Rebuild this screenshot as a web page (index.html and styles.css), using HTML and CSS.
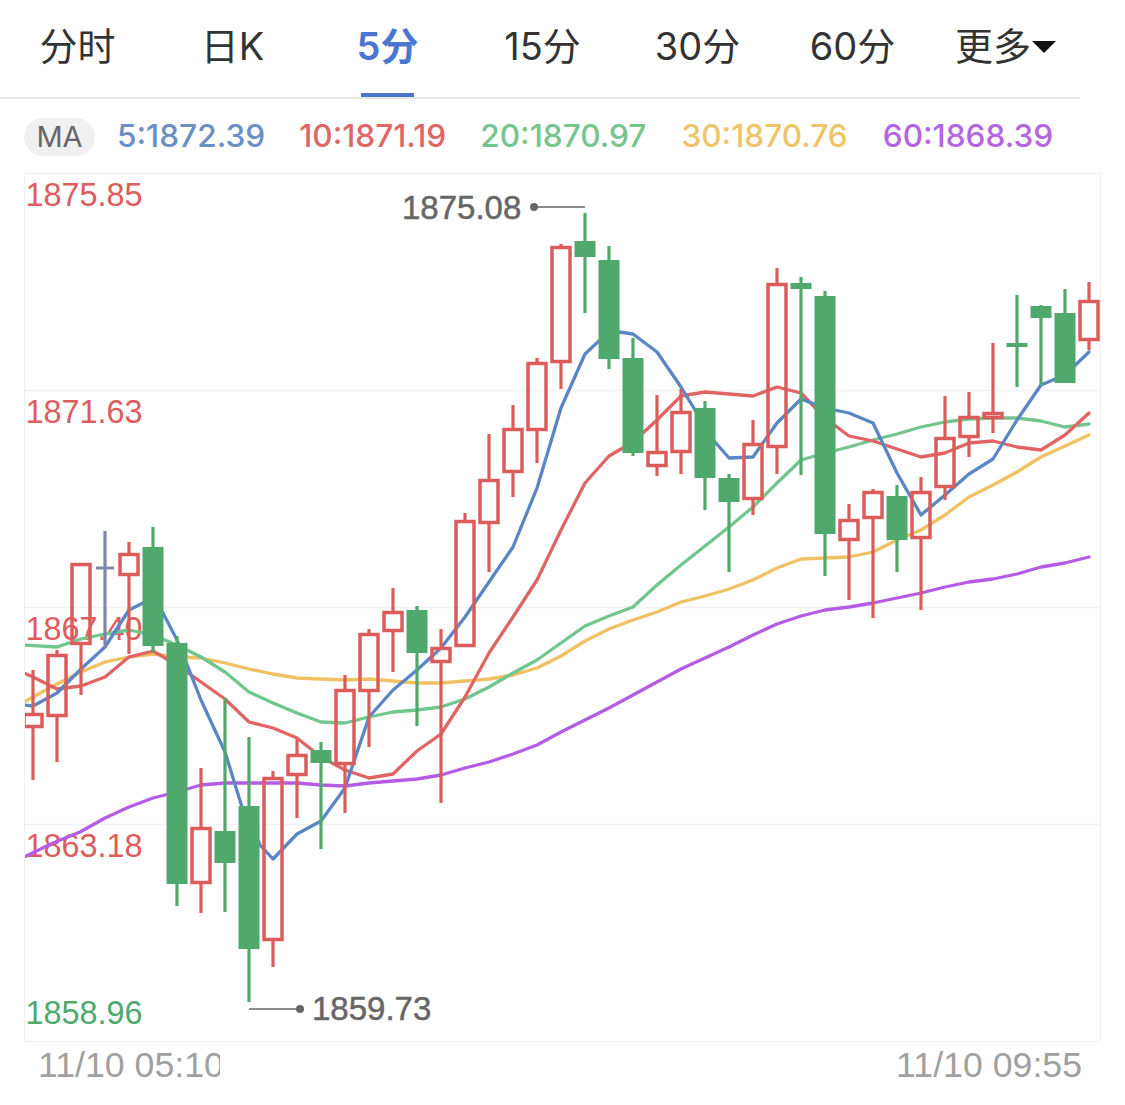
FILE: index.html
```html
<!DOCTYPE html>
<html lang="zh">
<head>
<meta charset="utf-8">
<title>K线图</title>
<link rel="stylesheet" href="styles.css">
</head>
<body>
<nav class="tabs">
  <a class="tab">分时</a>
  <a class="tab">日K</a>
  <a class="tab active">5分</a>
  <a class="tab">15分</a>
  <a class="tab">30分</a>
  <a class="tab">60分</a>
  <a class="tab">更多<span class="caret"></span></a>
</nav>
<div class="legend">
  <span class="pill">MA</span>
  <span class="ma ma5">5:1872.39</span>
  <span class="ma ma10">10:1871.19</span>
  <span class="ma ma20">20:1870.97</span>
  <span class="ma ma30">30:1870.76</span>
  <span class="ma ma60">60:1868.39</span>
</div>
<div class="chart">
  <svg class="plot" viewBox="25 174 1075 867" width="1075" height="867">
    <path class="grid" d="M25 390.5H1100M25 607.5H1100M25 824.5H1100"/>
    <text class="axis up" x="25.5" y="206">1875.85</text>
    <text class="axis up" x="25.5" y="423">1871.63</text>
    <text class="axis up" x="25.5" y="640">1867.40</text>
    <text class="axis up" x="25.5" y="857">1863.18</text>
    <text class="axis down" x="25.5" y="1024">1858.96</text>

    <polyline class="line l60" points="24,857 53,843 80,832 105,818 129,807 153,798 177,792 201,785 225,783 249,783 273,783 297,783 321,785 345,786 369,783 393,781 417,779 441,775 465,768 489,762 513,754 537,745 561,732 585,720 609,708 633,695 657,682 681,669 705,658 729,647 753,635 777,624 801,616 825,610 849,607 873,603 897,598 921,593 945,587 969,582 993,579 1017,574 1041,567 1065,563 1089,557"/>
    <polyline class="line l30" points="24,702 33,697 57,684 81,672 105,662 129,657 153,654 177,657 201,658 225,663 249,669 273,674 297,678 321,679 345,680 369,679 393,681 417,683 441,683 465,681 489,679 513,675 537,668 561,656 585,641 609,629 633,620 657,612 681,602 705,596 729,589 753,580 777,568 801,559 825,558 849,557 873,552 897,540 921,530 945,515 969,497 993,485 1017,472 1041,457 1065,446 1089,435"/>
    <polyline class="line l20" points="24,645 57,647 81,639 105,634 129,630 153,635 177,645 201,657 225,672 249,692 273,703 297,713 321,722 345,723 369,717 393,712 417,710 441,707 465,699 489,687 513,673 537,660 561,643 585,626 609,616 633,607 657,585 681,565 705,546 729,527 753,507 777,483 801,460 825,453 849,447 873,440 897,434 921,427 945,422 969,419 993,418 1017,418 1041,421 1065,427 1089,424"/>
    <polyline class="line l10" points="24,673 33,677 57,689 81,686 105,677 129,657 153,651 177,665 201,682 225,699 249,722 273,728 297,738 321,757 345,770 369,778 393,774 417,751 441,734 465,697 489,653 513,617 537,580 561,530 585,483 609,456 633,442 657,420 681,396 705,392 729,394 753,396 777,387 801,393 825,418 849,436 873,441 897,449 921,457 945,453 969,443 993,441 1017,447 1041,450 1065,435 1089,413"/>
    <polyline class="line l5" points="24,705 33,706 57,693 81,669 105,647 129,610 143,603 153,597 163,613 177,640 188,667 201,700 225,752 242,807 249,820 260,845 273,859 297,834 321,821 345,788 369,717 393,690 417,670 441,648 465,617 489,582 513,547 537,488 561,408 585,354 600,340 609,333 619,332 633,334 657,352 681,387 695,410 715,442 729,458 753,457 777,423 801,399 825,408 849,413 873,423 897,473 921,515 945,495 969,474 993,459 1017,420 1041,385 1065,375 1089,352"/>

    <path class="wick flat" d="M105 531V648M96 568H114"/>
    <path class="wick fall" d="M153 527V652M177 636V906M225 698V912M249 737V1002M321 742V849M417 606V726M585 213V313M609 246V369M633 338V456M705 401V510M729 474V572M801 277V475M825 291V576M897 485V572M1017 295V387M1041 305V385M1065 289V383"/>
    <g class="fall-bodies">
      <rect x="142.5" y="547" width="21" height="99"/>
      <rect x="166.5" y="643" width="21" height="241"/>
      <rect x="214.5" y="831" width="21" height="32"/>
      <rect x="238.5" y="806" width="21" height="143"/>
      <rect x="310.5" y="750" width="21" height="13"/>
      <rect x="406.5" y="610" width="21" height="43"/>
      <rect x="574.5" y="241" width="21" height="16"/>
      <rect x="598.5" y="260" width="21" height="99"/>
      <rect x="622.5" y="358" width="21" height="95"/>
      <rect x="694.5" y="408" width="21" height="70"/>
      <rect x="718.5" y="478" width="21" height="24"/>
      <rect x="790.5" y="283" width="21" height="6"/>
      <rect x="814.5" y="296" width="21" height="238"/>
      <rect x="886.5" y="496" width="21" height="44"/>
      <rect x="1006.5" y="343" width="21" height="4"/>
      <rect x="1030.5" y="306" width="21" height="12"/>
      <rect x="1054.5" y="313" width="21" height="70"/>
    </g>
    <path class="wick rise" d="M33 670V713M33 728V780M57 650V654M57 717V762M81 645V695M129 542V553M129 576V654M201 768V827M201 884V913M273 771V777M273 941V967M297 739V754M297 776V818M345 675V689M345 765V813M369 629V633M369 692V747M393 588V611M393 632V672M441 629V647M441 663V803M465 513V520M489 434V479M489 524V572M513 405V428M513 473V497M537 358V362M537 431V463M561 244V246M561 363V389M657 395V451M657 467V476M681 389V411M681 453V474M753 420V443M753 500V515M777 268V283M777 448V474M849 504V519M849 541V600M873 489V491M873 519V618M921 477V491M921 539V610M945 396V437M945 488V500M969 392V416M969 438V457M993 343V412M993 419V433M1089 282V300M1089 341V350"/>
    <g class="rise-bodies">
      <rect x="24" y="714.5" width="18" height="12"/>
      <rect x="48" y="655.5" width="18" height="60"/>
      <rect x="72" y="564.5" width="18" height="79"/>
      <rect x="120" y="554.5" width="18" height="20"/>
      <rect x="192" y="828.5" width="18" height="54"/>
      <rect x="264" y="778.5" width="18" height="161"/>
      <rect x="288" y="755.5" width="18" height="19"/>
      <rect x="336" y="690.5" width="18" height="73"/>
      <rect x="360" y="634.5" width="18" height="56"/>
      <rect x="384" y="612.5" width="18" height="18"/>
      <rect x="432" y="648.5" width="18" height="13"/>
      <rect x="456" y="521.5" width="18" height="124"/>
      <rect x="480" y="480.5" width="18" height="42"/>
      <rect x="504" y="429.5" width="18" height="42"/>
      <rect x="528" y="363.5" width="18" height="66"/>
      <rect x="552" y="247.5" width="18" height="114"/>
      <rect x="648" y="452.5" width="18" height="13"/>
      <rect x="672" y="412.5" width="18" height="39"/>
      <rect x="744" y="444.5" width="18" height="54"/>
      <rect x="768" y="284.5" width="18" height="162"/>
      <rect x="840" y="520.5" width="18" height="19"/>
      <rect x="864" y="492.5" width="18" height="25"/>
      <rect x="912" y="492.5" width="18" height="45"/>
      <rect x="936" y="438.5" width="18" height="48"/>
      <rect x="960" y="417.5" width="18" height="19"/>
      <rect x="984" y="413.5" width="18" height="4"/>
      <rect x="1080" y="301.5" width="18" height="38"/>
    </g>

    <path class="leader" d="M534 207H585M249 1009H300"/>
    <circle class="dot" cx="534" cy="207" r="4"/>
    <circle class="dot" cx="300" cy="1009" r="4"/>
    <text class="mark" x="402" y="219">1875.08</text>
    <text class="mark" x="312" y="1020">1859.73</text>
  </svg>
</div>
<div class="times">
  <span class="time clipped">11/10 05:10</span>
  <span class="time">11/10 09:55</span>
</div>
</body>
</html>
```
FILE: styles.css
```css
* { box-sizing: border-box; }
html, body { margin: 0; padding: 0; background: #fff; }
body {
  width: 1125px;
  height: 1105px;
  overflow: hidden;
  font-family: Inter, "Noto Sans CJK SC", sans-serif;
}
.tabs {
  display: grid;
  grid-template-columns: repeat(7, 155px);
  width: 1080px;
  height: 99px;
  border-bottom: 2px solid #e6e6e6;
}
.tab {
  position: relative;
  display: flex;
  justify-content: center;
  align-items: center;
  height: 97px;
  font-size: 38px;
  line-height: 1;
  color: #333;
  padding-bottom: 6px;
}
.tab.active {
  color: #4a76cf;
  font-weight: 600;
}
.tab.active::after {
  content: "";
  position: absolute;
  left: 51px;
  bottom: 0;
  width: 53px;
  height: 4px;
  background: #4a76cf;
}
.caret {
  display: inline-block;
  width: 0;
  height: 0;
  margin: 2px 4px 0 1px;
  border-left: 12px solid transparent;
  border-right: 12px solid transparent;
  border-top: 12px solid #111;
}
.legend {
  display: flex;
  align-items: center;
  height: 38px;
  margin: 19px 0 17px 24px;
  font-size: 31.6px;
  font-weight: 500;
  line-height: 1;
}
.pill {
  display: flex;
  align-items: center;
  justify-content: center;
  width: 71px;
  height: 38px;
  padding-bottom: 1px;
  border-radius: 19px;
  background: #f0f0f0;
  color: #666;
  font-size: 29px;
  font-weight: 400;
}
.ma { white-space: nowrap; padding-bottom: 2px; }
.ma5 { margin-left: 22px; color: #6b8fc5; }
.ma10 { margin-left: 34px; color: #e06666; }
.ma20 { margin-left: 34px; color: #76c48e; }
.ma30 { margin-left: 35px; color: #efc369; }
.ma60 { margin-left: 35px; color: #b465e2; }
.chart {
  width: 1077px;
  height: 869px;
  margin-left: 24px;
  border: 1px solid #f0f0f0;
}
.plot { display: block; }
.grid { fill: none; stroke: #f2f2f2; stroke-width: 1.5; }
.axis, .mark { font-family: "Liberation Sans", sans-serif; }
.axis { font-size: 32.4px; }
.up { fill: #dd5c5c; }
.down { fill: #4fa96d; }
.mark { font-size: 33px; fill: #666; stroke: #666; stroke-width: 0.5; }
.line { fill: none; stroke-width: 3.3; stroke-linejoin: round; stroke-linecap: round; }
.l5 { stroke: #5b86c4; }
.l10 { stroke: #e06464; }
.l20 { stroke: #70c68c; }
.l30 { stroke: #efc163; }
.l60 { stroke: #b45ce4; }
.wick { fill: none; stroke-width: 3.2; }
.rise { stroke: #dc5c5c; }
.fall { stroke: #4fa96d; }
.flat { stroke: #7d88a6; }
.fall-bodies rect { fill: #4fa96d; }
.rise-bodies rect { fill: none; stroke: #dc5c5c; stroke-width: 3.5; }
.leader { fill: none; stroke: #666; stroke-width: 1.5; }
.dot { fill: #666; }
.times {
  display: flex;
  justify-content: space-between;
  width: 1082px;
  margin-top: 4px;
  padding-left: 38px;
  font-family: "Liberation Sans", sans-serif;
  font-size: 35.7px;
  line-height: 38px;
  color: #a0a0a0;
}
.clipped { display: block; width: 182px; overflow: hidden; white-space: nowrap; }
```
